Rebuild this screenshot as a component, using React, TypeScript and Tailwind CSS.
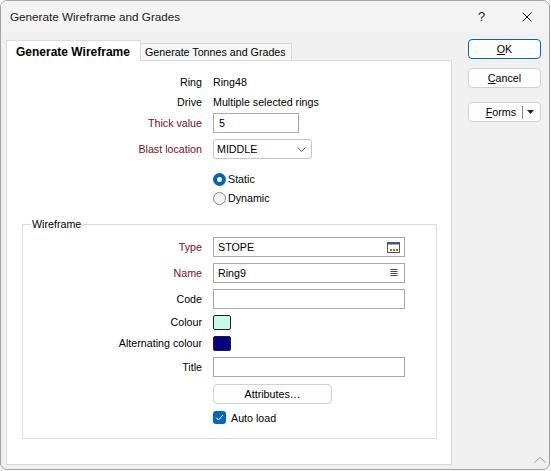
import React from "react";

function Row({ label, red, w, children, className = "" }: { label: string; red?: boolean; w: string; children?: React.ReactNode; className?: string }) {
  return (
    <div className={"flex items-center h-[20px] " + className}>
      <div className={(w === "top" ? "w-[195px] " : "w-[179px] ") + "text-right whitespace-nowrap " + (red ? "text-[#7a0c2c]" : "text-black")}>{label}</div>
      <div className="ml-[11px] flex items-center">{children}</div>
    </div>
  );
}

function TypeIcon() {
  return (
    <svg width="13" height="11" viewBox="0 0 13 11">
      <rect x="0.5" y="0.5" width="12" height="10" fill="#ffffff" stroke="#3d5a78" />
      <rect x="1" y="1" width="11" height="1.5" fill="#3d5a78" />
      <rect x="3" y="7" width="2" height="2" fill="#a8691c" />
      <rect x="6" y="7" width="2" height="2" fill="#a8691c" />
      <rect x="9" y="7" width="2" height="2" fill="#a8691c" />
    </svg>
  );
}

function ListIcon() {
  return (
    <svg width="8" height="8" viewBox="0 0 8 8">
      <rect x="0.5" y="0" width="7" height="1" fill="#444" />
      <rect x="0.5" y="2" width="7" height="1" fill="#444" />
      <rect x="0.5" y="4" width="7" height="1" fill="#444" />
      <rect x="0.5" y="6" width="7" height="1" fill="#444" />
    </svg>
  );
}

export default function App() {
  return (
    <div className="w-[551px] h-[471px] bg-[#f7f7f7] font-['Liberation_Sans',Arial,sans-serif] text-[10.7px] text-black">
      <div className="relative w-[550px] h-[470px] border border-[#a3a3a3] rounded-[7px] bg-[#f0f0f0] overflow-hidden flex flex-col">
        {/* Title bar */}
        <div className="h-[31px] flex items-center pl-[9px] bg-[#f3f3f3]">
          <span className="text-[11.7px] text-[#1a1a1a]">Generate Wireframe and Grades</span>
          <div className="ml-auto flex h-full">
            <div className="w-[45px] h-full flex items-center justify-center text-[13px] text-[#1a1a1a]">?</div>
            <div className="w-[45px] h-full flex items-center justify-center">
              <svg width="10" height="10" viewBox="0 0 10 10">
                <path d="M0.5 0.5 L9.5 9.5 M9.5 0.5 L0.5 9.5" stroke="#1a1a1a" strokeWidth="1" />
              </svg>
            </div>
          </div>
        </div>

        <div className="flex items-start">
          {/* Left column: tabs + panel */}
          <div className="ml-[5px] w-[446px] pt-[8px] flex flex-col">
            <div className="flex items-end">
              <div className="relative z-10 w-[135px] h-[21px] -mb-px bg-white border border-b-0 border-[#d9d9d9] flex items-center pl-[9px] pt-[2px] font-bold text-[12px] whitespace-nowrap">
                Generate Wireframe
              </div>
              <div className="w-[151px] h-[17px] bg-[#f6f6f6] border-t border-r border-[#d9d9d9] flex items-center pl-[4px] pt-[1px] whitespace-nowrap">
                Generate Tonnes and Grades
              </div>
            </div>
            <div className="h-[405px] border border-[#d9d9d9] bg-white flex flex-col pt-[11px]">
              <Row label="Ring" w="top">Ring48</Row>
              <Row label="Drive" w="top">Multiple selected rings</Row>
              <Row label="Thick value" red w="top" className="mt-[1px]">
                <div className="w-[86px] h-[20px] border border-[#a8a8a8] bg-white flex items-center pl-[5px]">5</div>
              </Row>
              <Row label="Blast location" red w="top" className="mt-[6px]">
                <div className="w-[99px] h-[20px] border border-[#c5c5c5] rounded-[3px] bg-white flex items-center pl-[3px]">
                  <span>MIDDLE</span>
                  <svg className="ml-auto mr-[5px]" width="9" height="5" viewBox="0 0 9 5">
                    <path d="M0.5 0.5 L4.5 4.5 L8.5 0.5" fill="none" stroke="#555" strokeWidth="1" />
                  </svg>
                </div>
              </Row>
              <div className="mt-[11px] h-[19px] flex items-center pl-[206px]">
                <div className="w-[13px] h-[13px] rounded-full bg-[#0067c0] flex items-center justify-center">
                  <div className="w-[5px] h-[5px] rounded-full bg-white" />
                </div>
                <span className="ml-[2px]">Static</span>
              </div>
              <div className="h-[19px] flex items-center pl-[206px]">
                <div className="w-[13px] h-[13px] rounded-full border border-[#858585] bg-[#f3f3f3]" />
                <span className="ml-[2px]">Dynamic</span>
              </div>

              <fieldset className="mt-[9px] ml-[15px] mr-[14px] border border-[#dcdcdc] pb-[10px]">
                <legend className="ml-[8px] px-[1px] h-[14px] leading-[14px]">Wireframe</legend>
                <Row label="Type" red w="grp" className="mt-[6px]">
                  <div className="w-[192px] h-[20px] border border-[#a8a8a8] bg-white flex items-center pl-[4px]">
                    <span>STOPE</span>
                    <span className="ml-auto mr-[4px] flex"><TypeIcon /></span>
                  </div>
                </Row>
                <Row label="Name" red w="grp" className="mt-[6px]">
                  <div className="w-[192px] h-[20px] border border-[#a8a8a8] bg-white flex items-center pl-[4px]">
                    <span>Ring9</span>
                    <span className="ml-auto mr-[6px] flex"><ListIcon /></span>
                  </div>
                </Row>
                <Row label="Code" w="grp" className="mt-[6px]">
                  <div className="w-[192px] h-[20px] border border-[#a8a8a8] bg-white" />
                </Row>
                <Row label="Colour" w="grp" className="mt-[3px]">
                  <div className="w-[18px] h-[15px] border border-[#222] rounded-[2px] bg-[#c4fce9]" />
                </Row>
                <Row label="Alternating colour" w="grp" className="mt-[1px]">
                  <div className="w-[18px] h-[15px] border border-[#222] rounded-[2px] bg-[#000080]" />
                </Row>
                <Row label="Title" w="grp" className="mt-[4px]">
                  <div className="w-[192px] h-[20px] border border-[#a8a8a8] bg-white" />
                </Row>
                <Row label="" w="grp" className="mt-[7px]">
                  <div className="w-[119px] h-[20px] border border-[#d0d0d0] rounded-[4px] bg-[#fdfdfd] flex items-center justify-center">Attributes…</div>
                </Row>
                <Row label="" w="grp" className="mt-[4px]">
                  <div className="w-[13px] h-[13px] rounded-[3px] bg-[#0067c0] flex items-center justify-center">
                    <svg width="9" height="7" viewBox="0 0 9 7">
                      <path d="M1 3.5 L3.5 6 L8 1" fill="none" stroke="#ffffff" strokeWidth="1" />
                    </svg>
                  </div>
                  <span className="ml-[5px]">Auto load</span>
                </Row>
              </fieldset>
            </div>
          </div>

          {/* Right column: buttons */}
          <div className="ml-[16px] w-[73px] pt-[7px] flex flex-col">
            <div className="h-[20px] border border-[#0067c0] rounded-[4px] bg-[#fdfdfd] flex items-center justify-center">
              <span><span className="underline">O</span>K</span>
            </div>
            <div className="mt-[9px] h-[20px] border border-[#d0d0d0] rounded-[4px] bg-[#fdfdfd] flex items-center justify-center">
              <span><span className="underline">C</span>ancel</span>
            </div>
            <div className="mt-[14px] h-[20px] border border-[#d0d0d0] rounded-[4px] bg-[#fdfdfd] flex items-center justify-end pr-[6px]">
              <span><span className="underline">F</span>orms</span>
              <span className="w-px h-[13px] bg-[#8a8a8a] ml-[6px] mr-[4px]" />
              <svg width="7" height="4" viewBox="0 0 7 4">
                <path d="M0 0 H7 L3.5 4 Z" fill="#222" />
              </svg>
            </div>
          </div>
        </div>

        {/* size grip */}
        <svg className="absolute right-[3px] bottom-[6px]" width="12" height="6" viewBox="0 0 12 6">
          <path d="M0.5 5.5 L6 0.5 L11.5 5.5" fill="none" stroke="#9a9a9a" strokeWidth="1" />
        </svg>
      </div>
    </div>
  );
}
